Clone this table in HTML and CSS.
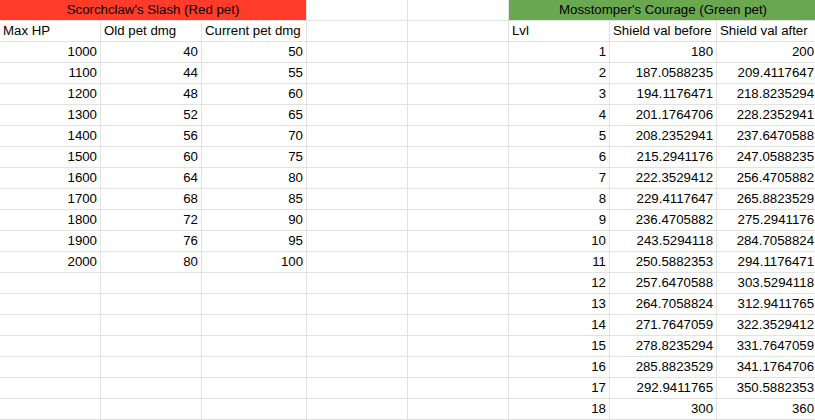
FILE: index.html
```html
<!DOCTYPE html>
<html>
<head>
<meta charset="utf-8">
<link rel="stylesheet" href="styles.css">
</head>
<body>
<div class="sheet">
  <div class="c title red span3">Scorchclaw's Slash (Red pet)</div><div class="c"></div><div class="c"></div><div class="c title green span3">Mosstomper's Courage (Green pet)</div>
  <div class="c">Max HP</div><div class="c">Old pet dmg</div><div class="c">Current pet dmg</div><div class="c"></div><div class="c"></div><div class="c">Lvl</div><div class="c">Shield val before</div><div class="c">Shield val after</div>
  <div class="c n">1000</div><div class="c n">40</div><div class="c n">50</div><div class="c"></div><div class="c"></div><div class="c n">1</div><div class="c n">180</div><div class="c n">200</div>
  <div class="c n">1100</div><div class="c n">44</div><div class="c n">55</div><div class="c"></div><div class="c"></div><div class="c n">2</div><div class="c n">187.0588235</div><div class="c n">209.4117647</div>
  <div class="c n">1200</div><div class="c n">48</div><div class="c n">60</div><div class="c"></div><div class="c"></div><div class="c n">3</div><div class="c n">194.1176471</div><div class="c n">218.8235294</div>
  <div class="c n">1300</div><div class="c n">52</div><div class="c n">65</div><div class="c"></div><div class="c"></div><div class="c n">4</div><div class="c n">201.1764706</div><div class="c n">228.2352941</div>
  <div class="c n">1400</div><div class="c n">56</div><div class="c n">70</div><div class="c"></div><div class="c"></div><div class="c n">5</div><div class="c n">208.2352941</div><div class="c n">237.6470588</div>
  <div class="c n">1500</div><div class="c n">60</div><div class="c n">75</div><div class="c"></div><div class="c"></div><div class="c n">6</div><div class="c n">215.2941176</div><div class="c n">247.0588235</div>
  <div class="c n">1600</div><div class="c n">64</div><div class="c n">80</div><div class="c"></div><div class="c"></div><div class="c n">7</div><div class="c n">222.3529412</div><div class="c n">256.4705882</div>
  <div class="c n">1700</div><div class="c n">68</div><div class="c n">85</div><div class="c"></div><div class="c"></div><div class="c n">8</div><div class="c n">229.4117647</div><div class="c n">265.8823529</div>
  <div class="c n">1800</div><div class="c n">72</div><div class="c n">90</div><div class="c"></div><div class="c"></div><div class="c n">9</div><div class="c n">236.4705882</div><div class="c n">275.2941176</div>
  <div class="c n">1900</div><div class="c n">76</div><div class="c n">95</div><div class="c"></div><div class="c"></div><div class="c n">10</div><div class="c n">243.5294118</div><div class="c n">284.7058824</div>
  <div class="c n">2000</div><div class="c n">80</div><div class="c n">100</div><div class="c"></div><div class="c"></div><div class="c n">11</div><div class="c n">250.5882353</div><div class="c n">294.1176471</div>
  <div class="c"></div><div class="c"></div><div class="c"></div><div class="c"></div><div class="c"></div><div class="c n">12</div><div class="c n">257.6470588</div><div class="c n">303.5294118</div>
  <div class="c"></div><div class="c"></div><div class="c"></div><div class="c"></div><div class="c"></div><div class="c n">13</div><div class="c n">264.7058824</div><div class="c n">312.9411765</div>
  <div class="c"></div><div class="c"></div><div class="c"></div><div class="c"></div><div class="c"></div><div class="c n">14</div><div class="c n">271.7647059</div><div class="c n">322.3529412</div>
  <div class="c"></div><div class="c"></div><div class="c"></div><div class="c"></div><div class="c"></div><div class="c n">15</div><div class="c n">278.8235294</div><div class="c n">331.7647059</div>
  <div class="c"></div><div class="c"></div><div class="c"></div><div class="c"></div><div class="c"></div><div class="c n">16</div><div class="c n">285.8823529</div><div class="c n">341.1764706</div>
  <div class="c"></div><div class="c"></div><div class="c"></div><div class="c"></div><div class="c"></div><div class="c n">17</div><div class="c n">292.9411765</div><div class="c n">350.5882353</div>
  <div class="c"></div><div class="c"></div><div class="c"></div><div class="c"></div><div class="c"></div><div class="c n">18</div><div class="c n">300</div><div class="c n">360</div>
</div>
</body>
</html>
```

FILE: styles.css
```css
html, body {
  margin: 0;
  padding: 0;
  overflow: hidden;
  background: #ffffff;
}

.sheet {
  display: grid;
  grid-template-columns: 100px 100px 104px 100px 100px 100px 106px 100px;
  grid-auto-rows: 20px;
  gap: 1px;
  padding: 0 1px 1px 0;
  width: max-content;
  background: #e2e2e2;
  font-family: "Liberation Sans", Arial, sans-serif;
  font-size: 13.25px;
  color: #000000;
}

.c {
  background: #ffffff;
  line-height: 20px;
  padding: 0 3px;
  white-space: nowrap;
  overflow: hidden;
}

.n {
  text-align: right;
}

.span3 {
  grid-column: span 3;
}

.title {
  text-align: center;
}

.red {
  background: #ff3b2a;
}

.green {
  background: #6aa84f;
}
```
